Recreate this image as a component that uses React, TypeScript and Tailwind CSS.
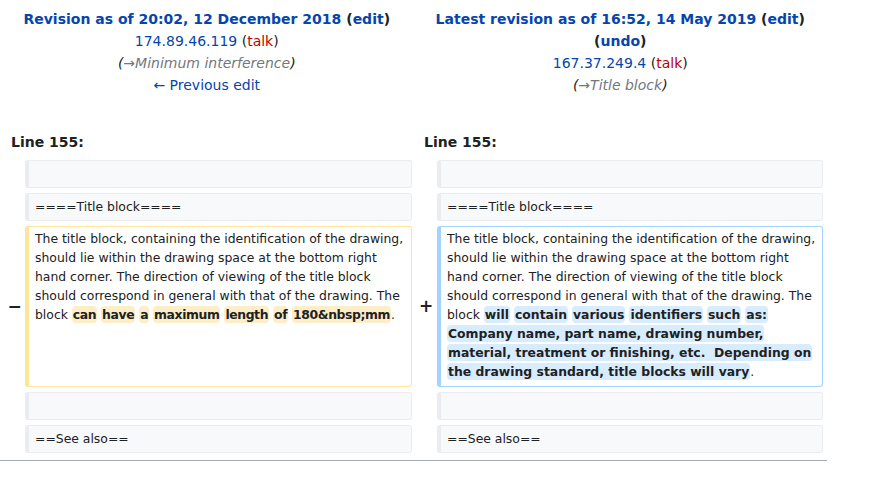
const LINK = "text-[#0645ad]";

function Header({ children }: { children: React.ReactNode }) {
  return <div className="flex flex-col items-center text-center leading-[22px]">{children}</div>;
}

function ContextBox({ text }: { text?: string }) {
  return (
    <div className="rounded-[3px] border border-[#eaecf0] border-l-4 bg-[#f8f9fa] px-[6px] py-[3px] leading-[19px] min-h-[28px] text-[#202122]">
      {text ?? "\u00a0"}
    </div>
  );
}

function Del({ children }: { children: React.ReactNode }) {
  return <span className="font-bold bg-[#feeec8] rounded-[4px] px-px py-px tracking-[-0.4px]">{children}</span>;
}

function Ins({ children }: { children: React.ReactNode }) {
  return <span className="font-bold bg-[#d8ecff] rounded-[4px] px-px py-px box-decoration-clone">{children}</span>;
}

const BASE =
  "The title block, containing the identification of the drawing, should lie within the drawing space at the bottom right hand corner. The direction of viewing of the title block should correspond in general with that of the drawing. The block ";

export default function App() {
  return (
    <div className="w-[874px] h-[477px] bg-white font-['DejaVu_Sans',sans-serif] text-[#202122] overflow-hidden">
      <div className="w-[827px]">
        <div className="grid grid-cols-2 text-[14px] pt-[8px]">
          <Header>
            <div className="font-bold">
              <span className={LINK}>Revision as of 20:02, 12 December 2018</span> (<span className={LINK}>edit</span>)
            </div>
            <div>
              <span className={LINK}>174.89.46.119</span> (<span className="text-[#ba0000]">talk</span>)
            </div>
            <div className="italic text-[#72777d]">
              <span className="text-[#202122]">(</span>→Minimum interference<span className="text-[#202122]">)</span>
            </div>
            <div className={LINK}>← Previous edit</div>
          </Header>
          <Header>
            <div className="font-bold">
              <span className={LINK}>Latest revision as of 16:52, 14 May 2019</span> (<span className={LINK}>edit</span>)
            </div>
            <div className="font-bold">
              (<span className={LINK}>undo</span>)
            </div>
            <div>
              <span className={LINK}>167.37.249.4</span> (<span className="text-[#ba0000]">talk</span>)
            </div>
            <div className="italic text-[#72777d]">
              <span className="text-[#202122]">(</span>→Title block<span className="text-[#202122]">)</span>
            </div>
          </Header>
        </div>

        <div className="grid grid-cols-[25px_387px_25px_386px] gap-y-[5px] text-[12.4px] mt-[37px]">
          <div className="col-span-2 font-bold text-[14px] pl-[11px] leading-[19px] mb-[3px]">Line 155:</div>
          <div className="col-span-2 font-bold text-[14px] pl-[12px] leading-[19px] mb-[3px]">Line 155:</div>

          <div />
          <ContextBox />
          <div />
          <ContextBox />

          <div />
          <ContextBox text="====Title block====" />
          <div />
          <ContextBox text="====Title block====" />

          <div className="flex items-center justify-center font-bold text-[17px] pl-[4px]">−</div>
          <div className="rounded-[3px] border border-[#ffe49c] border-l-4 bg-white px-[6px] pt-[2px] pb-[5px] leading-[19px]">
            {BASE}
            <Del>can</Del> <Del>have</Del> <Del>a</Del> <Del>maximum</Del> <Del>length</Del> <Del>of</Del>{" "}
            <Del>180&amp;nbsp;mm</Del>.
          </div>
          <div className="flex items-center justify-center font-bold text-[17px] pl-[3px]">+</div>
          <div className="rounded-[3px] border border-[#a3d3ff] border-l-4 bg-white px-[6px] pt-[2px] pb-[5px] leading-[19px]">
            {BASE}
            <Ins>will</Ins> <Ins>contain</Ins> <Ins>various</Ins> <Ins>identifiers</Ins> <Ins>such</Ins>{" "}
            <Ins>
              as: Company name, part name, drawing number, material, treatment or finishing, etc.&nbsp; Depending on the
              drawing standard, title blocks will vary
            </Ins>
            .
          </div>

          <div />
          <ContextBox />
          <div />
          <ContextBox />

          <div />
          <ContextBox text="==See also==" />
          <div />
          <ContextBox text="==See also==" />
        </div>
        <div className="mt-[7px] border-t border-[#a2a9b1]" />
      </div>
    </div>
  );
}
